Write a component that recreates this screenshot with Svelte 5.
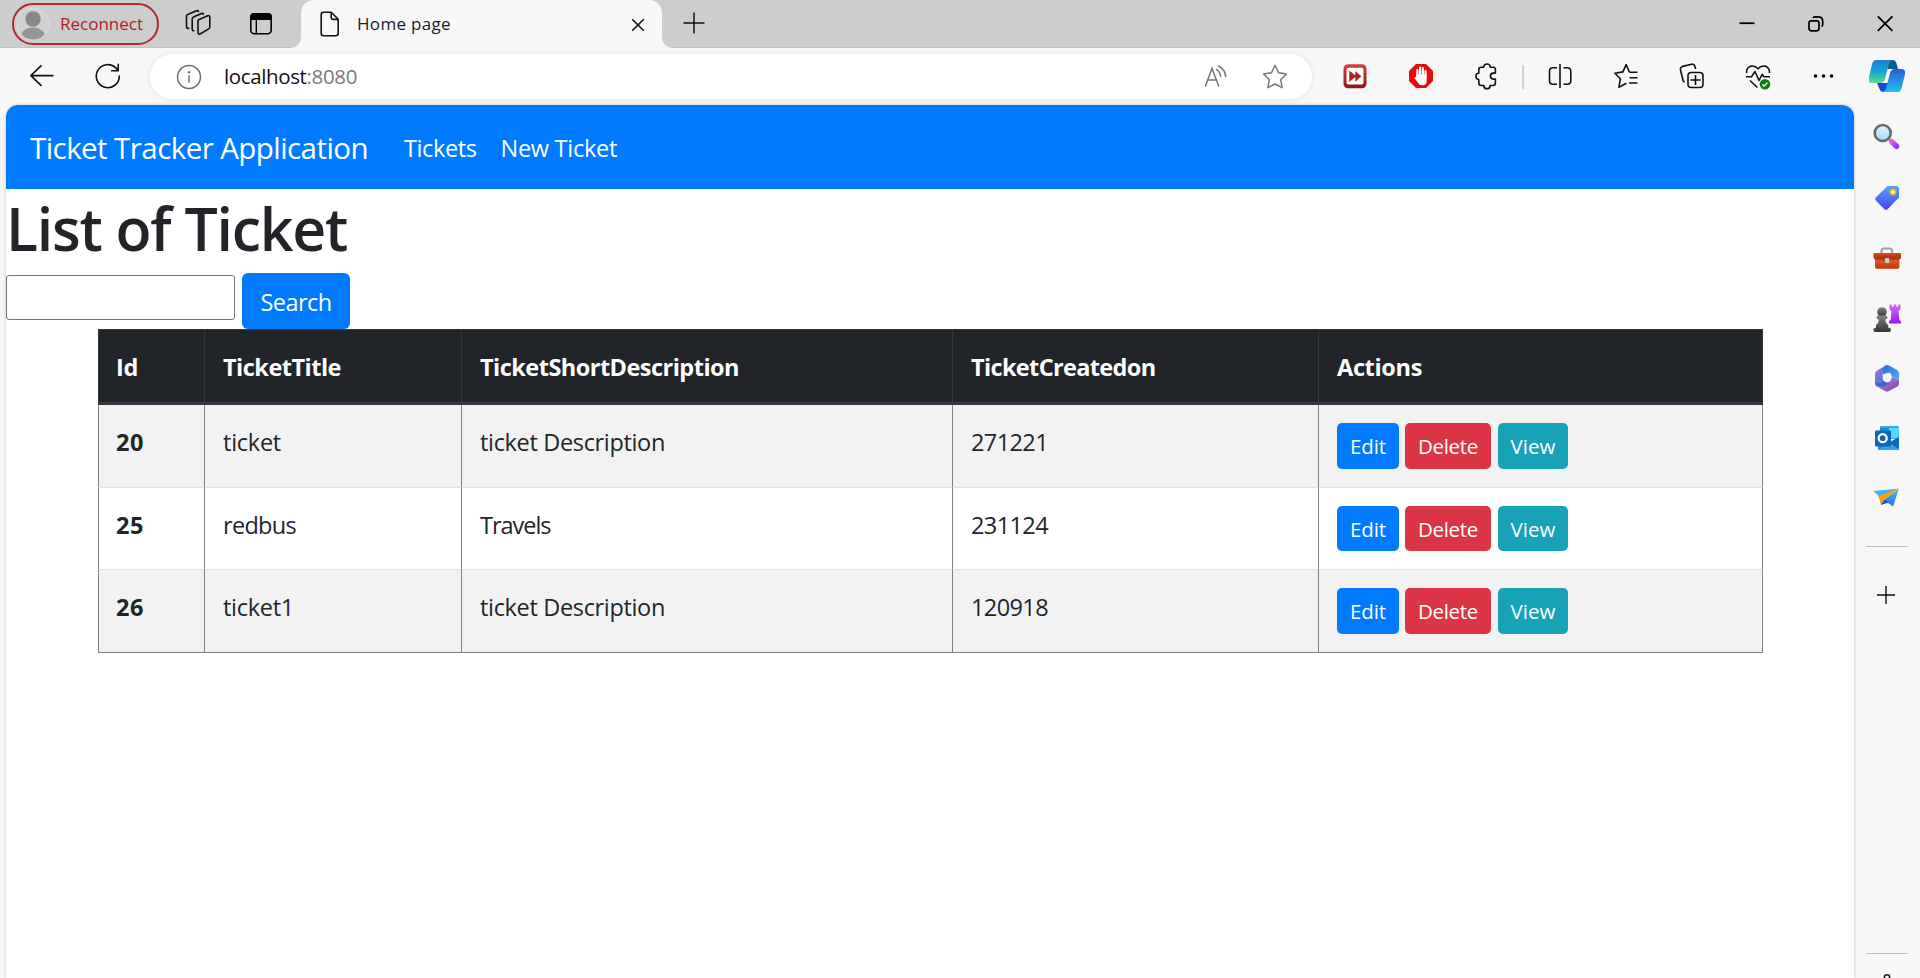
<script>
  const columns = [
    { label: 'Id', width: 106, fit: 22 },
    { label: 'TicketTitle', width: 257, fit: 118 },
    { label: 'TicketShortDescription', width: 491, fit: 259 },
    { label: 'TicketCreatedon', width: 366, fit: 184.5 },
    { label: 'Actions', width: 445, fit: 85 }
  ];

  const tickets = [
    { id: '20', title: 'ticket', tw: 58, description: 'ticket Description', dw: 185, created: '271221', height: 83 },
    { id: '25', title: 'redbus', tw: 73, description: 'Travels', dw: 70.5, created: '231124', height: 82 },
    { id: '26', title: 'ticket1', tw: 71, description: 'ticket Description', dw: 185, created: '120918', height: 83 }
  ];

  // Tracks a label so that its advance width equals the given number of pixels.
  function fit(node, width) {
    const natural = node.getBoundingClientRect().width;
    node.style.letterSpacing = `${(width - natural) / node.textContent.length}px`;
  }
</script>

<div class="window">
  <header class="tabstrip">
    <div class="profile">
      <svg width="34" height="34" viewBox="0 0 34 34">
        <defs><clipPath id="avatar"><circle cx="17" cy="17" r="15.5" /></clipPath></defs>
        <circle cx="17" cy="17" r="16" fill="#d2d0ce" stroke="#dedcda" stroke-width="1" />
        <circle cx="17" cy="12" r="7.7" fill="#8a8886" />
        <ellipse cx="17" cy="29" rx="12" ry="8.5" fill="#979593" clip-path="url(#avatar)" />
      </svg>
      <span class="label" use:fit={83}>Reconnect</span>
    </div>
    <svg class="ico workspaces" width="40" height="40" viewBox="0 0 40 40">
      <g fill="none" stroke="#111" stroke-width="1.6" stroke-linejoin="round" stroke-linecap="round">
        <path d="M19.3 17.2q0-1.2 1.1-1.7l8.7-3.7q2-.6 2 1.3v10q0 1.2-1.1 1.8l-8.2 4.8q-2.5 1.2-2.5-1.4z" transform="translate(.7 0)" />
        <path d="M15.8 26.7q-1.6.3-1.6-1.6V15q0-1.3 1.2-1.9l8.2-3.5q1.3-.5 1.9.5" />
        <path d="M10.8 24.3q-2.3.3-2.3-1.8V12.3q0-1.3 1.2-1.9l8.8-3.6q1.4-.5 2 .5" />
      </g>
    </svg>
    <svg class="ico vertical" width="40" height="40" viewBox="0 0 40 40">
      <rect x="9.8" y="9.8" width="20.4" height="20" rx="3.5" fill="none" stroke="#000" stroke-width="1.6" />
      <path d="M9 16V13q0-4 4-4h14q4 0 4 4v3z" fill="#000" />
      <path d="M15.3 15v15" stroke="#000" stroke-width="1.4" />
    </svg>
    <div class="tab">
      <svg width="20" height="26" viewBox="0 0 20 26">
        <path d="M3.6 1.3h7.6l7 7v14q0 2.4-2.4 2.4H3.6q-2.4 0-2.4-2.4V3.7q0-2.4 2.4-2.4zM11.2 1.5v4.7q0 2.2 2.2 2.2h4.7" fill="none" stroke="#111" stroke-width="1.6" stroke-linejoin="round" />
      </svg>
      <span class="label" use:fit={94}>Home page</span>
      <svg class="close" width="14" height="14" viewBox="0 0 14 14"><path d="M1.2 1.2l11.6 11.6M12.8 1.2L1.2 12.8" stroke="#111" stroke-width="1.6" /></svg>
    </div>
    <svg class="newtab" width="22" height="22" viewBox="0 0 22 22"><path d="M11 .5v21M.5 11h21" stroke="#111" stroke-width="1.5" /></svg>
    <div class="winctl">
      <svg width="40" height="40" viewBox="0 0 40 40"><path d="M12.5 19.2h15" stroke="#000" stroke-width="1.8" /></svg>
      <svg width="40" height="40" viewBox="0 0 40 40">
        <g fill="none" stroke="#000" stroke-width="1.7"><rect x="13" y="16.8" width="10" height="10" rx="2.2" /><path d="M17 14q.5-1.2 2-1.2h3.2q4.5 0 4.5 4.5v3.2q0 1.5-1.2 2" /></g>
      </svg>
      <svg width="40" height="40" viewBox="0 0 40 40"><path d="M12.8 12.4l14.6 14.4M27.4 12.4L12.8 26.8" stroke="#000" stroke-width="1.8" /></svg>
    </div>
  </header>

  <div class="toolbar">
    <div class="navicons">
      <svg width="40" height="40" viewBox="0 0 40 40"><path d="M31.5 19.6H9M19.5 9.3L8.8 19.6l10.7 10.3" fill="none" stroke="#111" stroke-width="1.6" stroke-linejoin="round" /></svg>
      <svg width="40" height="40" viewBox="0 0 40 40"><path d="M31.3 20a11.5 11.5 0 1 1-3-7.6l1.7 1.9M30.2 8.3v6.4h-6.6" fill="none" stroke="#111" stroke-width="1.6" stroke-linejoin="round" stroke-linecap="round" /></svg>
    </div>
    <div class="address">
      <svg width="26" height="26" viewBox="0 0 26 26"><circle cx="13" cy="13" r="11.5" fill="none" stroke="#707070" stroke-width="1.5" /><path d="M13 11.3v7.2" stroke="#707070" stroke-width="1.5" /><circle cx="13" cy="8.3" r="1.2" fill="#707070" /></svg>
      <span class="url" use:fit={133}>localhost<i>:8080</i></span>
      <svg class="read" width="40" height="40" viewBox="0 0 40 40">
        <g fill="none" stroke="#777" stroke-width="1.5" stroke-linecap="round"><path d="M10.5 29L17 11.5 23.7 29M12.6 23h9" /><path d="M21.5 12.3q3.6 2.3 4 7.2M23.5 9q6.5 3.2 7.2 10.5" /></g>
      </svg>
      <svg width="40" height="40" viewBox="0 0 40 40"><path d="M20 8.3l3.6 7.5 7.8 1.2-5.7 5.7 1.4 8L20 27l-7.1 3.7 1.4-8L8.6 17l7.8-1.2z" fill="none" stroke="#777" stroke-width="1.5" stroke-linejoin="round" /></svg>
    </div>
    <div class="tools">
      <svg width="40" height="40" viewBox="0 0 40 40">
        <defs><linearGradient id="ff" x2="0" y2="1"><stop offset="0" stop-color="#d9403c" /><stop offset="1" stop-color="#8d1714" /></linearGradient></defs>
        <rect x="8.5" y="8.3" width="23" height="24" rx="4.5" fill="url(#ff)" /><rect x="11.5" y="11.8" width="17" height="16.8" rx="2" fill="#fff" />
        <path d="M14.3 14.5l6 5V15l6 5.2-6 5.5v-4.6l-6 4.8z" fill="#b0201d" />
      </svg>
      <svg width="40" height="40" viewBox="0 0 40 40">
        <path d="M15 8h10l7 7v10l-7 7H15l-7-7V15z" fill="#e60c0c" />
        <g stroke="#fff" stroke-width="2.2" stroke-linecap="round"><path d="M16.4 20v-6M19.1 19v-7.3M21.9 19v-6.9M24.5 20v-5" /></g>
        <path d="M15.2 18.5h10.5v6.2q0 4.5-4.5 4.5-2.8 0-4.1-2.2L13.4 22q-.2-1.8 1.8-.7z" fill="#fff" />
      </svg>
      <svg width="40" height="40" viewBox="0 0 40 40"><path d="M11.8 13.6q0-2.4 2.4-2.4h2.6v-.4q.2-2.8 3.2-2.8t3.2 2.8v.4h3.1q2.1 0 2.1 2.1v3.8h-2q-3 .2-3 3t3 3h2v4q0 2.4-2.4 2.4h-2.8v.4q-.2 2.9-3.2 2.9t-3.2-2.9v-.4h-2.6q-2.4 0-2.4-2.4v-3.6h-.3q-2.6-.4-2.6-3.2t2.6-3h.3z" fill="none" stroke="#111" stroke-width="1.6" stroke-linejoin="round" /></svg>
      <span class="sep"></span>
      <svg width="40" height="40" viewBox="0 0 40 40"><path d="M20 8v24M17 11.7h-4q-3.5 0-3.5 3.5v9.5q0 3.5 3.5 3.5h4M23.5 11.7H27q3.8 0 3.8 3.5v9.5q0 3.5-3.8 3.5h-3.5" fill="none" stroke="#111" stroke-width="1.6" /></svg>
      <svg width="40" height="40" viewBox="0 0 40 40"><path d="M24.6 16.3l-1.2-.3-3.2-7.4-3.3 7.3-8 1.3 5.5 5.6-1.5 8.5 7.5-4M24.3 16.3h7.2M23.5 21.7h8M23 27h8.5" fill="none" stroke="#111" stroke-width="1.6" stroke-linejoin="round" /></svg>
      <svg width="40" height="40" viewBox="0 0 40 40">
        <g fill="none" stroke="#111" stroke-width="1.6" stroke-linejoin="round"><rect x="16" y="16.5" width="15" height="15" rx="3.3" /><path d="M23.5 19v10M18.5 24h10M12.7 26q-1.3-.4-1.7-1.8L8.5 14q-.6-2.8 2-3.6l9-2.2q2.7-.4 3.4 2l.8 2.8" /></g>
      </svg>
      <svg width="40" height="40" viewBox="0 0 40 40">
        <path d="M8.5 17q-.4-5.2 4.5-6.9 4.2-.8 7 2.7 2.8-3.5 7-2.7 4.9 1.7 4.5 6.9M8 20.7h5.5l3.5-5.2 4 9 3.2-6.2 1.6 2.4H32M12 24.5l7.4 7" fill="none" stroke="#111" stroke-width="1.6" stroke-linejoin="round" />
        <circle cx="27" cy="28.2" r="5.3" fill="#107c10" /><path d="M24.4 28.4l1.8 1.7 3.2-3.5" fill="none" stroke="#fff" stroke-width="1.4" />
      </svg>
      <svg width="40" height="40" viewBox="0 0 40 40"><circle cx="11.5" cy="20" r="1.8" /><circle cx="19.5" cy="20" r="1.8" /><circle cx="27.500" cy="20" r="1.8" /></svg>
      <svg class="copilot" width="40" height="40" viewBox="0 0 40 40">
        <defs>
          <linearGradient id="cpA" x2="0" y2="1"><stop offset="0" stop-color="#1b7fd0" /><stop offset=".5" stop-color="#13a4d4" /><stop offset="1" stop-color="#61dc8e" /></linearGradient>
          <linearGradient id="cpB" x2="0" y2="1"><stop offset="0" stop-color="#2460d4" /><stop offset=".5" stop-color="#268ceb" /><stop offset="1" stop-color="#1dc2ee" /></linearGradient>
        </defs>
        <path d="M17 12h9l-4 16h-8z" fill="#fff" />
        <path d="M20 4h6q2.400 0 3.300 2.700L31 13H21z" fill="#0b5b8c" />
        <path d="M10 27h11l-2 9h-2.500q-3 0-4-3z" fill="#1747d1" />
        <path d="M9 4h16.500q-2.600.8-3.400 3.800L17.800 23.500q-1 3.500-4.600 3.500H5q-4.100 0-3-6L5 8.300Q6.200 4 9 4z" fill="url(#cpA)" />
        <path d="M31 36H15.200q2.800-.6 3.700-3.500l4.200-16q1.100-3.500 4.500-3.500H35q4 0 2.800 6l-3 12.500Q33.600 36 31 36z" fill="url(#cpB)" />
      </svg>
    </div>
  </div>

  <div class="body">
    <main class="page">
      <nav>
        <a class="brand" href="#home"><span use:fit={338}>Ticket Tracker Application</span></a>
        <a href="#tickets"><span use:fit={72.5}>Tickets</span></a>
        <a href="#new"><span use:fit={116.5}>New Ticket</span></a>
      </nav>
      <h1><span use:fit={341}>List of Ticket</span></h1>
      <form>
        <input type="text" aria-label="Search tickets" />
        <button type="button" class="btn primary search"><span use:fit={71}>Search</span></button>
      </form>
      <table>
        <colgroup>
          {#each columns as c}<col style:width="{c.width}px" />{/each}
        </colgroup>
        <thead>
          <tr>{#each columns as c}<th><span use:fit={c.fit}>{c.label}</span></th>{/each}</tr>
        </thead>
        <tbody>
          {#each tickets as t}
            <tr style:height="{t.height}px">
              <td class="id"><span use:fit={28}>{t.id}</span></td>
              <td><span use:fit={t.tw}>{t.title}</span></td>
              <td><span use:fit={t.dw}>{t.description}</span></td>
              <td><span use:fit={77}>{t.created}</span></td>
              <td class="actions">
                <div>
                  <button type="button" class="btn primary edit"><span use:fit={36}>Edit</span></button>
                  <button type="button" class="btn danger"><span use:fit={60}>Delete</span></button>
                  <button type="button" class="btn info"><span use:fit={45}>View</span></button>
                </div>
              </td>
            </tr>
          {/each}
        </tbody>
      </table>
    </main>

    <aside>
      <svg class="find" width="40" height="40" viewBox="0 0 40 40">
        <defs>
          <linearGradient id="lens" x2="0" y2="1"><stop offset="0" stop-color="#e4f5ff" /><stop offset="1" stop-color="#a6dcf8" /></linearGradient>
          <linearGradient id="violet" x2="1" y2="1"><stop offset="0" stop-color="#e45ceb" /><stop offset="1" stop-color="#9b35ee" /></linearGradient>
        </defs>
        <path d="M22 22l4 4" stroke="#999" stroke-width="3" /><path d="M25 25l4.5 4.3" stroke="url(#violet)" stroke-width="5.5" stroke-linecap="round" />
        <circle cx="15.7" cy="16" r="8" fill="url(#lens)" stroke="#666b68" stroke-width="2.6" />
      </svg>
      <svg width="40" height="40" viewBox="0 0 40 40">
        <defs><linearGradient id="tag" x2="0" y2="1"><stop offset="0" stop-color="#55a4fa" /><stop offset="1" stop-color="#4543ef" /></linearGradient></defs>
        <path d="M20.5 8H29q3 0 3 3v8.500L20.800 31q-1.800 1.700-3.600 0L9 22.800q-1.800-1.800 0-3.600z" fill="url(#tag)" />
        <circle cx="26" cy="14" r="2.5" fill="#fff" stroke="#edbb20" stroke-width="1.8" />
      </svg>
      <svg width="40" height="40" viewBox="0 0 40 40">
        <defs><linearGradient id="box" x2="0" y2="1"><stop offset="0" stop-color="#d64e19" /><stop offset=".35" stop-color="#a53311" /><stop offset=".5" stop-color="#df5624" /><stop offset="1" stop-color="#bb3710" /></linearGradient></defs>
        <path d="M14.5 16v-3q0-2.500 2.500-2.500h5.500q2.500 0 2.500 2.500v3" fill="none" stroke="#a2a2a2" stroke-width="2.2" />
        <path d="M8 15h25q1 0 1 1v4l-1.500 1.500V29q0 1.700-1.700 1.700H9.700Q8 30.700 8 29v-7.500L6.500 20v-4q0-1 1.500-1z" fill="url(#box)" />
        <rect x="18" y="20" width="4.3" height="5" rx="1" fill="#cacaca" />
      </svg>
      <svg width="40" height="40" viewBox="0 0 40 40">
        <defs><linearGradient id="pawn" x2="0" y2="1"><stop offset="0" stop-color="#858585" /><stop offset="1" stop-color="#333" /></linearGradient><linearGradient id="rook" x2="0" y2="1"><stop offset="0" stop-color="#cb70ef" /><stop offset="1" stop-color="#a116f4" /></linearGradient></defs>
        <path d="M22.5 6.500h2.200v2h2v-2h2.600v2h2v-2h2.200v4.800l-2 2 .8 8.200 1.700 2v2H22v-2l1.700-2 .8-8.200-2-2z" fill="url(#rook)" />
        <circle cx="15" cy="14" r="4.8" fill="url(#pawn)" />
        <path d="M9.5 19.500q0-2 2-2h7q2 0 2 2t-2.300 2q.3 3.500 3 5.500v2.500q2.800.4 2.800 2.500T22 34H8.500q-2.200 0-2.200-2t2.700-2.500V27q2.700-2 3-5.500-2.500 0-2.500-2z" fill="url(#pawn)" />
      </svg>
      <svg width="40" height="40" viewBox="0 0 40 40">
        <defs>
          <linearGradient id="mA" x2="1" y2="1"><stop offset="0" stop-color="#a875df" /><stop offset="1" stop-color="#3479d4" /></linearGradient>
          <linearGradient id="mB" x2="1" y2="1"><stop offset="0" stop-color="#3268d2" /><stop offset="1" stop-color="#44b7f5" /></linearGradient>
          <linearGradient id="mC" y2="1"><stop offset="0" stop-color="#c387e2" /><stop offset="1" stop-color="#7345a8" /></linearGradient>
        </defs>
        <path d="M18 8L10 12.500Q8 13.700 8 16v9q0 2 1.500 3.500L17 24l-1.500-7q0-6 2.500-9z" fill="url(#mA)" />
        <path d="M18 7.500q2-1 4 0l8 4.500q2 1.200 2 3.500v7l-7-4-2-4-7.500 2V12q.3-3 2.500-4.500z" fill="url(#mB)" />
        <path d="M25 18.500l7 4V26q0 1.500-2 2.700L22 33q-2 1-4 0l-8-4.500q-1-.5-1.500-1.500l7 .3 7-3.800z" fill="url(#mC)" />
        <path d="M8 23q3 3.700 7.500 1.700l1-2.200 6 2.500-4.500 3q-5 2-9-1-1-1.500-1-4z" fill="#4262cd" /><circle cx="20" cy="20" r="4.4" fill="#f7f7f7" />
      </svg>
      <svg width="40" height="40" viewBox="0 0 40 40">
        <path d="M14 8h17q1 0 1 1v12H13V9q0-1 1-1z" fill="#30a9e8" /><path d="M22 10h10v10H22z" fill="#50d9ff" /><path d="M13 10h9v10h-9z" fill="#168cdb" />
        <path d="M11 21l10 4 11-6v12q0 1-1 1H12q-1 0-1-1z" fill="#1490df" /><path d="M32 19v12L22 25z" fill="#1068b3" /><path d="M11 32l11-7 10 6q0 1-1 1z" fill="#28a8ea" />
        <rect x="8" y="12.5" width="16" height="16" rx="1.2" fill="#0f66b5" /><circle cx="15.7" cy="20.2" r="4" fill="none" stroke="#fff" stroke-width="2.3" />
      </svg>
      <svg width="40" height="40" viewBox="0 0 40 40">
        <defs><linearGradient id="send" x2="0" y2="1"><stop offset="0" stop-color="#47c2f4" /><stop offset="1" stop-color="#256be6" /></linearGradient></defs>
        <path d="M6.5 13L32 10.500 12 18.500z" fill="#3db4ee" /><path d="M15 25l4-3-5 5z" fill="#1145a4" /><path d="M32 10.500L26 28.500 17 22z" fill="url(#send)" />
        <path d="M32 10.500L11.500 18l2.500 9 3.500-5.500z" fill="#f2a20d" /><path d="M14 27l3.500-5.500 4 3z" fill="#1d52bc" />
      </svg>
      <hr class="first" />
      <svg class="add" width="18" height="18" viewBox="0 0 18 18"><path d="M9 0v18M0 9h18" stroke="#111" stroke-width="1.4" /></svg>
      <hr class="second" />
      <svg class="gear" width="10" height="12" viewBox="0 0 10 12"><path d="M1.8 12V10L2.500 9V4q0-2.200 1.500-2.200h2Q7.500 1.800 7.500 4v5l1 1v2" transform="translate(0 -.8)" fill="none" stroke="#111" stroke-width="1.6" /></svg>
    </aside>
  </div>
</div>

<style>
  :global(body) { margin: 0; overflow: hidden; }
  * { box-sizing: border-box; }
  svg { display: block; flex: none; }
  span { white-space: nowrap; display: inline-block; }
  .window { width: 1920px; height: 978px; display: flex; flex-direction: column; background: #f7f7f7; overflow: hidden; font-family: "Open Sans", "Noto Sans", sans-serif; }
  .tabstrip { height: 48px; display: flex; background: #cdcdcd; border-bottom: 1px solid #c2c2c2; flex: none; }
  .profile { width: 147px; height: 42px; margin: 3px 0 0 12px; border: 2px solid #b3292c; border-radius: 21px; display: flex; align-items: center; padding-left: 2px; color: #b3191d; }
  .label { font-size: 17px; line-height: 24px; }
  .profile .label { margin-left: 10px; }
  .ico { margin-top: 4px; }
  .workspaces { margin-left: 19px; }
  .vertical { margin-left: 23px; }
  .tab { position: relative; width: 361px; height: 48px; margin-left: 20px; background: #f7f7f7; border-radius: 13px 13px 0 0; display: flex; align-items: center; padding-left: 19px; color: #1b1b1b; }
  .tab::before, .tab::after { content: ""; position: absolute; bottom: 0; width: 10px; height: 10px; }
  .tab::before { left: -10px; background: radial-gradient(circle at 0 0, #cdcdcd 9.5px, #f7f7f7 10px); }
  .tab::after { right: -10px; background: radial-gradient(circle at 100% 0, #cdcdcd 9.5px, #f7f7f7 10px); }
  .tab .label { margin-left: 17px; }
  .close { margin: 2px 17px 0 auto; }
  .newtab { margin: 12px 0 0 21px; }
  .winctl { display: flex; gap: 29px; margin: 4px 15px 0 auto; }
  .toolbar { height: 57px; flex: none; display: flex; align-items: flex-start; }
  .navicons { width: 150px; display: flex; gap: 26px; padding: 8px 0 0 22px; }
  .address { width: 1162px; height: 45px; margin-top: 6px; border-radius: 23px; background: #fff; box-shadow: 0 0 6px rgba(0, 0, 0, .09); display: flex; align-items: center; padding: 0 17px 0 26px; }
  .url { font-size: 20.5px; line-height: 28px; margin: -2px 0 0 22px; color: #101010; }
  .url i { font-style: normal; color: #7a7a7a; }
  .read { margin: 0 20px 0 auto; }
  .tools { display: flex; margin-left: 23px; padding-top: 8px; gap: 26.2px; }
  .sep { width: 2px; height: 24px; margin: 9px -11px 0 -11.2px; background: #d2d2d2; }
  .copilot { margin-left: -3.5px; }
  .body { flex: 1; min-height: 0; display: flex; }
  .page { width: 1848px; margin-left: 6px; background: #fff; border-radius: 12px 12px 0 0; overflow: hidden; box-shadow: 0 0 3px rgba(0, 0, 0, .25); color: #212529; }
  nav { height: 84px; background: #007bff; display: flex; align-items: center; padding-left: 24px; }
  nav a { color: #fff; text-decoration: none; font-size: 23.5px; line-height: 36px; margin-right: 24px; padding-top: 2px; }
  nav .brand { font-size: 29.5px; line-height: 45px; margin-right: 36px; padding-top: 0; }
  h1 { margin: 0; height: 84px; padding-top: 3px; font-size: 59px; line-height: 72px; font-weight: 600; }
  form { display: flex; height: 56px; gap: 7px; }
  input { width: 229px; height: 45px; margin: 2px 0 0; border: 1px solid #767676; border-radius: 3px; padding: 0; background: #fff; }
  .btn { border: 0; border-radius: 5px; color: #fff; font-family: inherit; padding: 0; text-align: center; display: flex; justify-content: center; }
  .primary { background: #007bff; }
  .danger { background: #dc3545; width: 86px; margin-right: 1px; }
  .info { background: #17a2b8; width: 70px; }
  .edit { width: 62px; }
  .search { width: 108px; height: 56px; padding-top: 11px; border-radius: 6px; font-size: 23.5px; line-height: 36px; }
  table { width: 1665px; margin-left: 92px; table-layout: fixed; border-collapse: separate; border-spacing: 0; font-size: 23.5px; line-height: 36px; }
  th { height: 76px; padding: 19px 0 0 18px; text-align: left; vertical-align: top; font-weight: 700; color: #fff; background: #212529; border: 1px solid #32383e; border-width: 1px 0 3px 1px; }
  td { height: inherit; padding: 19px 0 0 18px; vertical-align: top; border-left: 1px solid #808080; border-bottom: 1px solid #dee2e6; }
  th:first-child { padding-left: 17px; }
  th:last-child { border-right-width: 1px; }
  td:last-child { border-right: 1px solid #808080; }
  tbody tr:nth-child(odd) { background: #f2f2f2; }
  tbody tr:last-child td { border-bottom-color: #808080; }
  th span, td span { vertical-align: top; }
  td.id { font-weight: 700; padding-left: 17px; }
  td.actions { padding-top: 18px; }
  .actions div { display: flex; gap: 6px; height: 46px; }
  tr:nth-child(2) .actions div { height: 45px; }
  .actions .btn { height: 100%; padding-top: 7px; font-size: 20.5px; line-height: 32px; }
  aside { width: 66px; display: flex; flex-direction: column; align-items: center; padding-top: 13px; gap: 20px; }
  .find { margin: -1px 0 1px -1px; }
  hr { width: 42px; height: 1px; border: 0; margin: 0; background: #bdbdbd; flex: none; }
  .first { margin-top: 8px; }
  .add { margin: 19px 2px 0 0; }
  .second { margin-top: 329px; }
</style>
